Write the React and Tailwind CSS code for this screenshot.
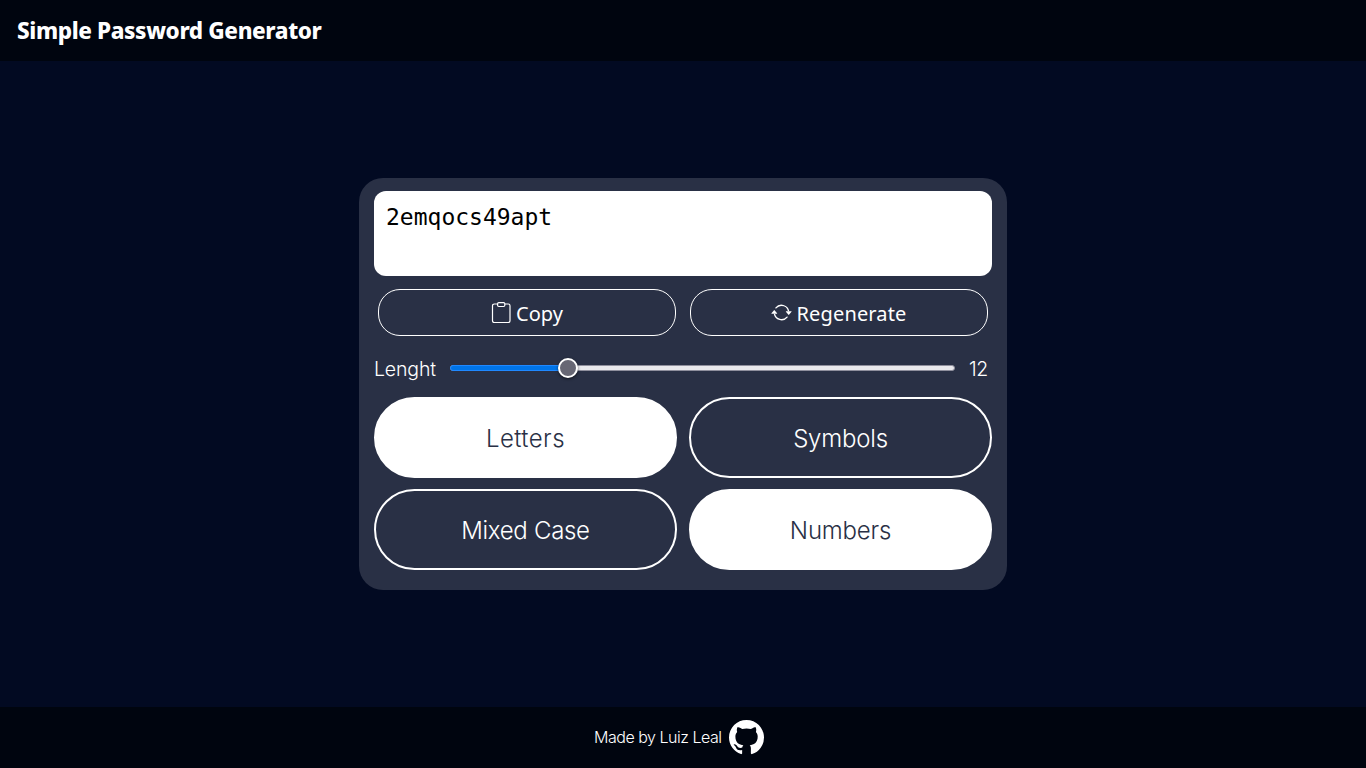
import { BsArrowRepeat, BsGithub } from "react-icons/bs";

function ClipboardIcon() {
  return (
    <svg width="20" height="21" viewBox="0 0 20 21" fill="none" stroke="currentColor" strokeWidth="1.2">
      <path d="M6.5 2H3.2a1.7 1.7 0 0 0-1.7 1.7v15.1a1.7 1.7 0 0 0 1.7 1.7h14.1a1.7 1.7 0 0 0 1.7-1.7V3.7A1.7 1.7 0 0 0 17.3 2h-3.3" />
      <rect x="6.6" y="0.6" width="7.2" height="3.9" rx="1.2" />
    </svg>
  );
}

function Action({ icon, children }) {
  return (
    <button className="flex h-[47px] w-[298px] items-center justify-center rounded-[22px] border border-white font-['Noto_Sans',sans-serif] text-[20px] text-white">
      {icon}
      {children}
    </button>
  );
}

function Toggle({ on, children }) {
  return (
    <button
      className={`flex h-[81px] items-center justify-center rounded-full border-2 border-white pt-[3px] text-[24px] font-light ${
        on ? "bg-white text-[#293045]" : "text-white"
      }`}
    >
      {children}
    </button>
  );
}

export default function App() {
  return (
    <div className="flex h-screen flex-col bg-[#020a22] font-['Inter',sans-serif] text-white">
      <header className="flex h-[61px] items-center bg-[#00050f] pl-[17px]">
        <h1 className="whitespace-nowrap pt-px font-['Noto_Sans',sans-serif] text-[22.5px] font-extrabold tracking-[-0.38px]">Simple Password Generator</h1>
      </header>
      <main className="flex flex-1 items-center justify-center">
        <section className="flex h-[412px] w-[648px] flex-col rounded-[24px] bg-[#293045] px-[15px] pt-[13px]">
          <div className="h-[85px] rounded-[12px] bg-white px-3 pt-[12px] font-['DejaVu_Sans_Mono',monospace] text-[23px] leading-[28px] text-black">
            2emqocs49apt
          </div>
          <div className="mt-[13px] flex justify-between px-1">
            <Action icon={<ClipboardIcon />}>
              <span className="ml-[5px] pt-[2px]">Copy</span>
            </Action>
            <Action icon={<BsArrowRepeat size={21} />}>
              <span className="ml-1 pt-[2px] tracking-[0.15px]">Regenerate</span>
            </Action>
          </div>
          <div className="mt-[16px] flex h-[32px] items-center text-[19.5px] font-light">
            <span className="w-[76px] pt-[4px] tracking-[-0.15px]">Lenght</span>
            <div className="relative h-[6px] w-[505px] rounded-[3px] border border-[#8f8f9d] bg-[#e9e9ed]">
              <div className="absolute -left-px -top-px h-[6px] w-[118px] rounded-l-[3px] border border-[#2088ff] bg-[#0074e8]" />
              <div className="absolute left-[107px] top-[-8px] h-5 w-5 rounded-full border-2 border-white bg-[#676774] shadow-[0_1px_3px_rgba(0,0,0,0.6)]" />
            </div>
            <span className="ml-[14px] pt-[4px] tracking-[-0.3px]">12</span>
          </div>
          <div className="mt-[13px] grid grid-cols-[303px_303px] gap-x-[12px] gap-y-[11px]">
            <Toggle on><span className="tracking-[0.45px]">Letters</span></Toggle>
            <Toggle><span className="tracking-[-0.2px]">Symbols</span></Toggle>
            <Toggle><span className="tracking-[-0.3px]">Mixed Case</span></Toggle>
            <Toggle on><span className="tracking-[-0.2px]">Numbers</span></Toggle>
          </div>
        </section>
      </main>
      <footer className="flex h-[61px] items-center bg-[#00050f] pl-[594px] text-[16px] font-light">
        <span className="w-[135px] whitespace-nowrap pb-[2px] tracking-[-0.48px]">Made by Luiz Leal</span>
        <BsGithub size={35} />
      </footer>
    </div>
  );
}
